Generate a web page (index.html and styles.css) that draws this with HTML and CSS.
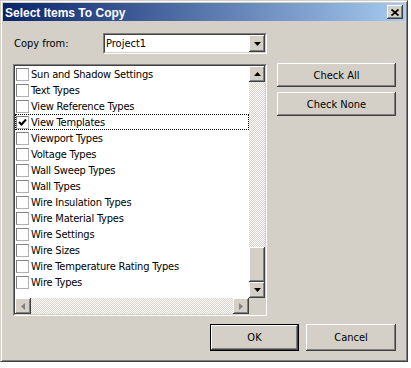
FILE: index.html
```html
<!DOCTYPE html>
<html>
<head>
<meta charset="utf-8">
<link rel="stylesheet" href="styles.css">
</head>
<body>
<div class="window">
  <div class="titlebar">
    <span class="title">Select Items To Copy</span>
    <div class="close raised">
      <svg width="8" height="7" viewBox="0 0 8 7"><path d="M0.5 0.5 L7.5 6.5 M7.5 0.5 L0.5 6.5" stroke="#000" stroke-width="1.8" fill="none"/></svg>
    </div>
  </div>
  <div class="content">
    <div class="main">
      <div class="left">
        <div class="from-row">
          <span class="label">Copy from:</span>
          <div class="combo">
            <div class="combo-inner">
              <span class="combo-text">Project1</span>
              <div class="arrow-btn raised">
                <svg width="7" height="4" viewBox="0 0 7 4"><path d="M0 0 H7 L3.5 4 Z" fill="#000"/></svg>
              </div>
            </div>
          </div>
        </div>
        <div class="listbox">
          <div class="listbox-inner">
            <div class="list-area">
              <div class="items">
                <div class="row"><span class="cb"></span><span>Sun and Shadow Settings</span></div>
                <div class="row"><span class="cb"></span><span>Text Types</span></div>
                <div class="row"><span class="cb"></span><span>View Reference Types</span></div>
                <div class="row focus"><span class="cb"><svg width="9" height="9" viewBox="0 0 9 9"><path d="M1 4 L3.5 6.5 L8 1.5" stroke="#000" stroke-width="2" fill="none"/></svg></span><span>View Templates</span></div>
                <div class="row"><span class="cb"></span><span>Viewport Types</span></div>
                <div class="row"><span class="cb"></span><span>Voltage Types</span></div>
                <div class="row"><span class="cb"></span><span>Wall Sweep Types</span></div>
                <div class="row"><span class="cb"></span><span>Wall Types</span></div>
                <div class="row"><span class="cb"></span><span>Wire Insulation Types</span></div>
                <div class="row"><span class="cb"></span><span>Wire Material Types</span></div>
                <div class="row"><span class="cb"></span><span>Wire Settings</span></div>
                <div class="row"><span class="cb"></span><span>Wire Sizes</span></div>
                <div class="row"><span class="cb"></span><span>Wire Temperature Rating Types</span></div>
                <div class="row"><span class="cb"></span><span>Wire Types</span></div>
              </div>
              <div class="vscroll">
                <div class="sb-btn raised">
                  <svg width="7" height="4" viewBox="0 0 7 4"><path d="M0 4 H7 L3.5 0 Z" fill="#000"/></svg>
                </div>
                <div class="track vtrack"></div>
                <div class="thumb raised"></div>
                <div class="sb-btn raised">
                  <svg width="7" height="4" viewBox="0 0 7 4"><path d="M0 0 H7 L3.5 4 Z" fill="#000"/></svg>
                </div>
              </div>
            </div>
            <div class="hscroll">
              <div class="sb-btn raised">
                <svg width="4" height="7" viewBox="0 0 4 7"><path d="M4 0 V7 L0 3.5 Z" fill="#808080"/></svg>
              </div>
              <div class="track htrack"></div>
              <div class="sb-btn raised">
                <svg width="4" height="7" viewBox="0 0 4 7"><path d="M0 0 V7 L4 3.5 Z" fill="#808080"/></svg>
              </div>
              <div class="corner"></div>
            </div>
          </div>
        </div>
      </div>
      <div class="side">
        <div class="btn raised">Check All</div>
        <div class="btn raised">Check None</div>
      </div>
    </div>
    <div class="footer">
      <div class="btn default"><div class="btn-face raised">OK</div></div>
      <div class="btn raised footer-btn">Cancel</div>
    </div>
  </div>
</div>
</body>
</html>
```
FILE: styles.css
```css
html, body {
  margin: 0;
  padding: 0;
  background: #ffffff;
}
body {
  width: 411px;
  height: 368px;
  overflow: hidden;
  font-family: "DejaVu Sans Condensed", "Liberation Sans", Arial, sans-serif;
  font-stretch: condensed;
  font-size: 11px;
  color: #000;
}
.window {
  width: 408px;
  height: 362px;
  box-sizing: border-box;
  background: #d4d0c8;
  border-top: 1px solid #d4d0c8;
  border-left: 1px solid #d4d0c8;
  border-right: 1px solid #404040;
  border-bottom: 1px solid #404040;
  box-shadow: inset 1px 1px #ffffff, inset -1px -1px #808080;
  padding: 2px 2px 0 2px;
}
.raised {
  background: #d4d0c8;
  box-shadow: inset -1px -1px #404040, inset 1px 1px #ffffff, inset -2px -2px #808080, inset 2px 2px #d4d0c8;
  box-sizing: border-box;
}
.titlebar {
  height: 18px;
  background: linear-gradient(to right, #0a246a 0%, #a6caf0 100%);
  display: flex;
  align-items: center;
  justify-content: space-between;
  padding: 0 2px 0 2px;
  box-sizing: border-box;
}
.title {
  color: #fff;
  font-weight: bold;
  font-size: 12px;
  font-stretch: normal;
  font-family: "Liberation Sans", Arial, sans-serif;
  padding-top: 1px;
}
.close {
  width: 16px;
  height: 14px;
  display: flex;
  align-items: center;
  justify-content: center;
}
.content {
  padding: 12px 9px 0 10px;
}
.main {
  display: flex;
  gap: 10px;
}
.left {
  width: 254px;
}
.from-row {
  display: flex;
  align-items: center;
  height: 21px;
}
.label {
  width: 89px;
  padding-left: 1px;
}
.combo {
  width: 164px;
  height: 21px;
  box-sizing: border-box;
  border-top: 1px solid #808080;
  border-left: 1px solid #808080;
  border-right: 1px solid #ffffff;
  border-bottom: 1px solid #ffffff;
}
.combo-inner {
  height: 100%;
  box-sizing: border-box;
  border-top: 1px solid #404040;
  border-left: 1px solid #404040;
  border-right: 1px solid #d4d0c8;
  border-bottom: 1px solid #d4d0c8;
  background: #fff;
  display: flex;
  align-items: center;
  justify-content: space-between;
}
.combo-text {
  padding-left: 1px;
}
.arrow-btn {
  width: 16px;
  height: 17px;
  display: flex;
  align-items: center;
  justify-content: center;
}
.listbox {
  margin-top: 10px;
  width: 254px;
  height: 252px;
  box-sizing: border-box;
  border-top: 1px solid #808080;
  border-left: 1px solid #808080;
  border-right: 1px solid #ffffff;
  border-bottom: 1px solid #ffffff;
}
.listbox-inner {
  height: 100%;
  box-sizing: border-box;
  border-top: 1px solid #404040;
  border-left: 1px solid #404040;
  border-right: 1px solid #d4d0c8;
  border-bottom: 1px solid #d4d0c8;
  background: #fff;
  display: flex;
  flex-direction: column;
}
.list-area {
  display: flex;
  height: 232px;
}
.items {
  flex: 1;
}
.row {
  height: 16px;
  display: flex;
  align-items: center;
  gap: 2px;
  padding-left: 1px;
  box-sizing: border-box;
  white-space: nowrap;
  letter-spacing: -0.2px;
}
.row.focus {
  outline: 1px dotted #000;
  outline-offset: -1px;
}
.cb {
  width: 13px;
  height: 13px;
  box-sizing: border-box;
  border-top: 1px solid #808080;
  border-left: 1px solid #808080;
  border-right: 1px solid #b0b0b0;
  border-bottom: 1px solid #b0b0b0;
  background: #fff;
  display: flex;
  align-items: center;
  justify-content: center;
  flex: none;
}
.vscroll {
  width: 16px;
  display: flex;
  flex-direction: column;
}
.sb-btn {
  width: 16px;
  height: 16px;
  display: flex;
  align-items: center;
  justify-content: center;
  flex: none;
}
.track {
  background: repeating-conic-gradient(#ffffff 0 25%, #d4d0c8 0 50%) 0 0 / 2px 2px;
}
.vtrack {
  height: 165px;
}
.thumb {
  height: 35px;
}
.hscroll {
  display: flex;
  height: 16px;
}
.htrack {
  flex: 1;
}
.corner {
  width: 16px;
  background: #d4d0c8;
}
.side {
  width: 120px;
  padding-top: 30px;
  display: flex;
  flex-direction: column;
  gap: 5px;
}
.btn {
  height: 24px;
  display: flex;
  align-items: center;
  justify-content: center;
  box-sizing: border-box;
}
.footer {
  display: flex;
  justify-content: flex-end;
  gap: 7px;
  margin-top: 8px;
}
.default {
  width: 89px;
  height: 27px;
  border: 1px solid #000;
}
.btn-face {
  width: 100%;
  height: 100%;
  display: flex;
  align-items: center;
  justify-content: center;
}
.footer-btn {
  width: 90px;
  height: 27px;
}
```
